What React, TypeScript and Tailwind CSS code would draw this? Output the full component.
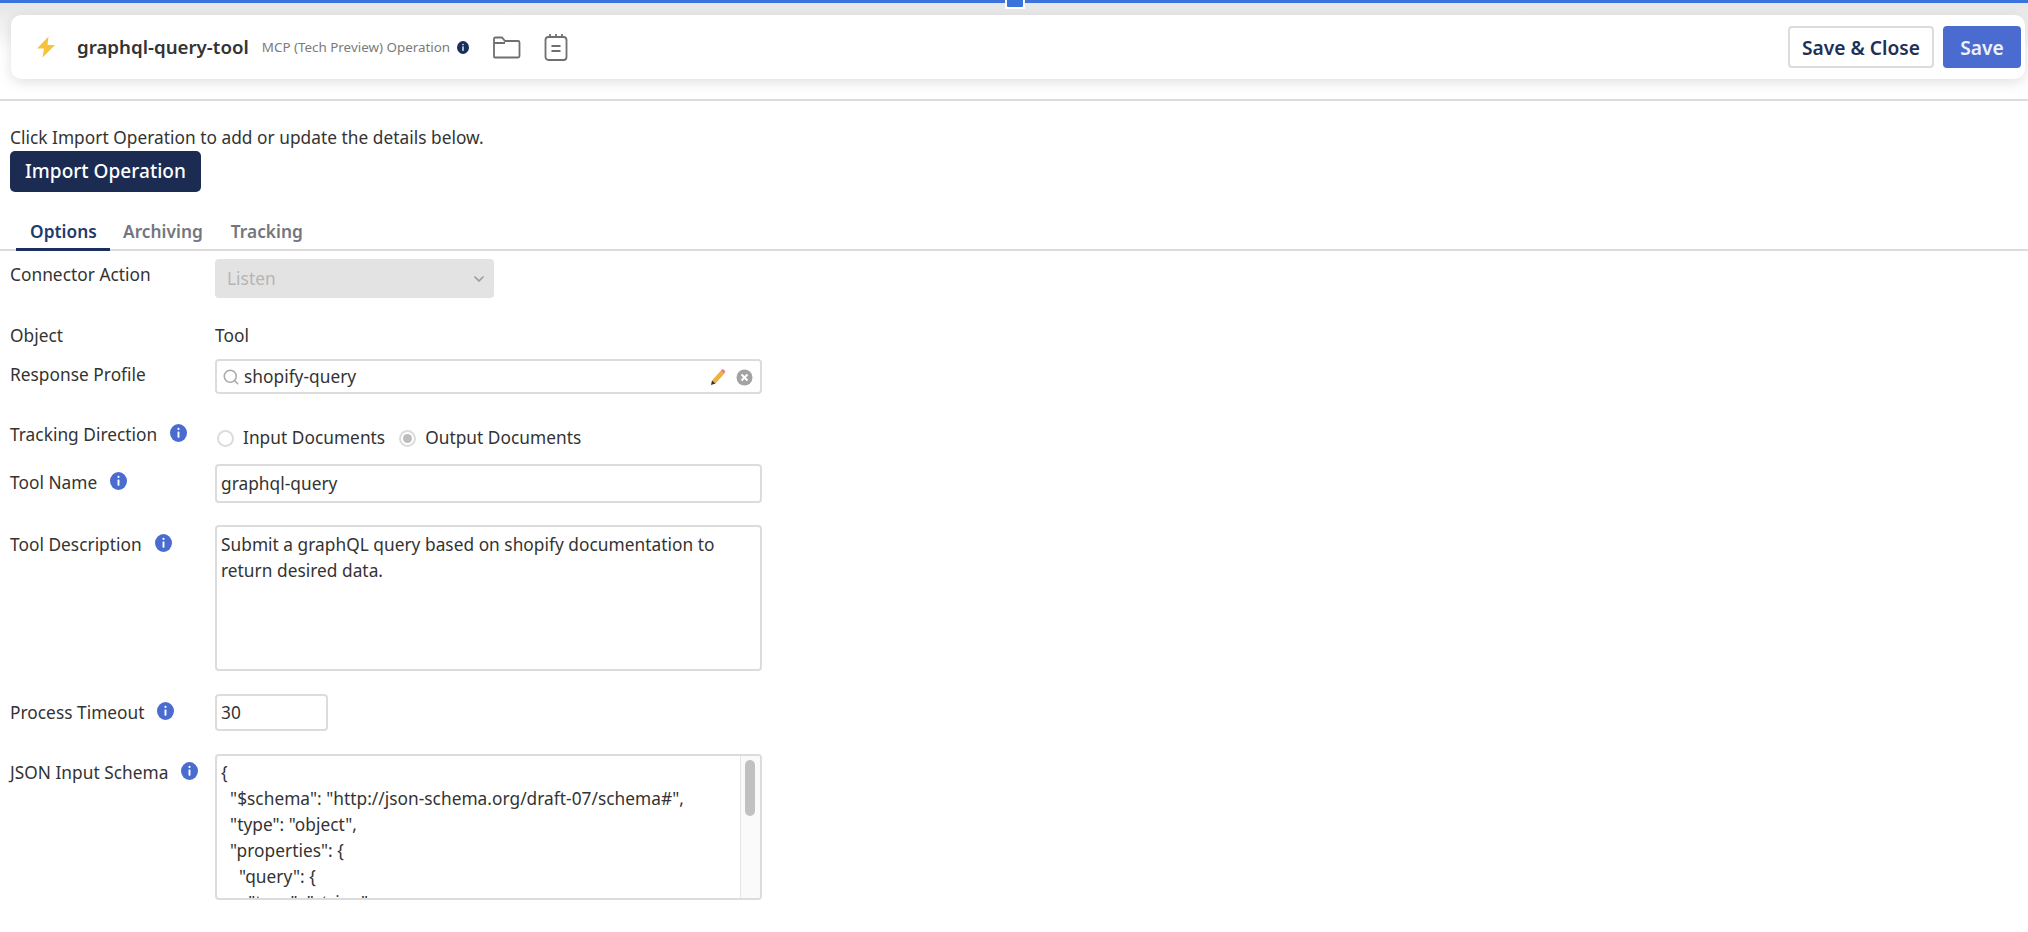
import React from "react";
import { ChevronDown, Search } from "lucide-react";

function Info({ navy = false, small = false }: { navy?: boolean; small?: boolean }) {
  const size = small ? 12 : 17;
  return (
    <svg width={size} height={small ? 13 : 18} viewBox="0 0 16 16" preserveAspectRatio="none" className="shrink-0">
      <circle cx="8" cy="8" r="8" fill={navy ? "#1b2f5e" : "#4a6cd0"} />
      <circle cx="8" cy="4.4" r="1" fill="#fff" />
      <rect x="7.1" y="6.6" width="1.8" height="5.6" rx="0.6" fill="#fff" />
    </svg>
  );
}

function Row({ label, info, top, children, className }: { label: string; info?: number; top: string; children: React.ReactNode; className: string }) {
  return (
    <div className={`flex items-start ${className}`}>
      <div className={`w-[204px] shrink-0 flex items-center ${top}`}>
        <span className="whitespace-nowrap">{label}</span>
        {info !== undefined && (
          <span style={{ marginLeft: info }} className="flex -mt-[4px]">
            <Info />
          </span>
        )}
      </div>
      {children}
    </div>
  );
}

const schema = `{
  "$schema": "http://json-schema.org/draft-07/schema#",
  "type": "object",
  "properties": {
    "query": {
      "type": "string",`;

export default function App() {
  return (
    <div className="h-[932px] overflow-hidden bg-white text-[#333333] text-[17.3px] tracking-[0.03px] leading-[26px] relative" style={{ fontFamily: '"Noto Sans", sans-serif' }}>
      <div className="absolute left-[1005px] top-0 w-[20px] h-[9px] bg-white z-10 flex justify-center">
        <div className="w-[16px] h-[7px] bg-[#3b73dc] rounded-b-[1px]" />
      </div>
      <div className="h-[3px] bg-[#3b73dc]" />
      <div className="h-[98px] border-b-2 border-[#dcdcdc] bg-gradient-to-b from-[#e6e6e6] via-white to-white pt-[12px] pl-[11px] pr-[3px]">
        <div className="h-[64px] bg-white rounded-[10px] shadow-[0_3px_14px_rgba(0,0,0,0.13)] flex items-center pl-[25px] pr-[4px] tracking-normal">
          <svg width="20" height="22" viewBox="0 0 20 22" className="shrink-0">
            <path d="M12.5 0.5 L1 12.5 L8 12.5 L6.5 21.5 L19 9 L11.5 9 Z" fill="#f4c33b" />
          </svg>
          <span className="ml-[21px] text-[18.7px] font-semibold text-[#333333] whitespace-nowrap">graphql-query-tool</span>
          <span className="ml-[13px] text-[13.4px] text-[#7b7b7b] whitespace-nowrap">MCP (Tech Preview) Operation</span>
          <span className="ml-[7px] flex"><Info navy small /></span>
          <svg width="29" height="23" viewBox="0 0 29 23" fill="none" stroke="#6f6f6f" strokeWidth="1.8" className="ml-[23px] shrink-0">
            <path d="M2 20.5 V3 Q2 1.5 3.5 1.5 H10 L13 5 H26 Q27.5 5 27.5 6.5 V20 Q27.5 21.5 26 21.5 H3 Q2 21.5 2 20.5 Z M2 7 H13" />
          </svg>
          <svg width="24" height="28" viewBox="0 0 24 28" fill="none" stroke="#6f6f6f" strokeWidth="1.8" className="ml-[23px] shrink-0">
            <rect x="1.5" y="4" width="21" height="23" rx="3" />
            <path d="M6 1 V5 M12 1 V5 M18 1 V5 M7.5 13 H16.5 M7.5 18 H16.5" />
          </svg>
          <div className="ml-auto flex items-center gap-[9px]">
            <button className="w-[146px] h-[42px] rounded-[4px] border-2 border-[#dcdcdc] bg-white text-[19.2px] font-semibold text-[#1f3057] pt-[1px]">Save &amp; Close</button>
            <button className="w-[78px] h-[42px] rounded-[4px] bg-[#4a6cd0] text-[19.2px] font-semibold text-[#eef1fb] pt-[1px]">Save</button>
          </div>
        </div>
      </div>

      <div className="pl-[10px] pt-[24px] whitespace-nowrap">Click Import Operation to add or update the details below.</div>
      <button className="ml-[10px] block w-[191px] h-[41px] rounded-[5px] bg-[#1b2b52] text-white text-[19px] font-medium pb-[2px]">Import Operation</button>

      <div className="mt-[26px] h-[33px] border-b-2 border-[#dcdcdc] pl-[16px] flex text-[17.3px] font-semibold text-[#73767c]">
        <div className="w-[94px] h-[33px] border-b-[3px] border-[#1b2f5e] text-[#1f3a6e] pl-[14px] leading-[27px]">Options</div>
        <div className="ml-[13px] leading-[27px]">Archiving</div>
        <div className="ml-[28px] leading-[27px]">Tracking</div>
      </div>

      <div className="pl-[10px]">
        <Row label="Connector Action" top="pt-[3px]" className="mt-[8px] h-[39px]">
          <div className="ml-[1px] w-[279px] h-[39px] rounded-[4px] bg-[#e3e3e3] flex items-center justify-between pl-[12px] pr-[7px] text-[#b5b5b5]">
            <span>Listen</span>
            <ChevronDown size={16} color="#9a9a9a" strokeWidth={2.5} />
          </div>
        </Row>

        <Row label="Object" top="" className="mt-[25px] h-[26px]">
          <span className="ml-[1px]">Tool</span>
        </Row>

        <Row label="Response Profile" top="pt-[3px]" className="mt-[10px] h-[35px]">
          <div className="ml-[1px] w-[547px] h-[35px] rounded-[4px] border-2 border-[#dcdcdc] flex items-center pl-[5px] pr-[7px]">
            <Search size={18} color="#a8a8a8" strokeWidth={2} className="shrink-0" />
            <span className="ml-[4px]">shopify-query</span>
            <svg width="16" height="18" viewBox="0 0 16 18" className="ml-auto shrink-0">
              <path d="M2 12.5 L10.5 3 L14 6 L5.5 15.5 Z" fill="#eeb13e" />
              <path d="M10.5 3 L12 1.4 Q12.6 0.8 13.5 1.5 L15 2.8 Q15.6 3.6 15 4.3 L14 6 Z" fill="#ef7f7f" />
              <path d="M2 12.5 L5.5 15.5 L1 17 Z" fill="#333" />
            </svg>
            <svg width="17" height="17" viewBox="0 0 17 17" className="ml-[10px] mt-[2px] shrink-0">
              <circle cx="8.5" cy="8.5" r="8" fill="#a3a3a3" />
              <path d="M5.5 5.5 L11.5 11.5 M11.5 5.5 L5.5 11.5" stroke="#fff" strokeWidth="2" />
            </svg>
          </div>
        </Row>

        <Row label="Tracking Direction" info={13} top="" className="mt-[28px] h-[26px]">
          <div className="flex items-center pt-[3px] pl-[3px]">
            <span className="w-[17px] h-[17px] rounded-full border-2 border-[#dcdcdc] bg-white" />
            <span className="ml-[9px]">Input Documents</span>
            <span className="ml-[14px] w-[17px] h-[17px] rounded-full border-2 border-[#dcdcdc] bg-white flex items-center justify-center">
              <span className="w-[9px] h-[9px] rounded-full bg-[#bdbdbd]" />
            </span>
            <span className="ml-[9px]">Output Documents</span>
          </div>
        </Row>

        <Row label="Tool Name" info={13} top="pt-[6px]" className="mt-[16px] h-[39px]">
          <div className="ml-[1px] w-[547px] h-[39px] rounded-[4px] border-2 border-[#dcdcdc] flex items-center pl-[4px]">graphql-query</div>
        </Row>

        <Row label="Tool Description" info={13} top="pt-[7px]" className="mt-[22px] h-[146px]">
          <div className="ml-[1px] w-[547px] h-[146px] rounded-[4px] border-2 border-[#dcdcdc] pl-[4px] pr-[5px] pt-[5px]">
            Submit a graphQL query based on shopify documentation to return desired data.
          </div>
        </Row>

        <Row label="Process Timeout" info={12} top="pt-[6px]" className="mt-[23px] h-[37px]">
          <div className="ml-[1px] w-[113px] h-[37px] rounded-[4px] border-2 border-[#dcdcdc] flex items-center pl-[4px]">30</div>
        </Row>

        <Row label="JSON Input Schema" info={13} top="pt-[6px]" className="mt-[23px] h-[146px]">
          <div className="ml-[1px] w-[547px] h-[146px] rounded-[4px] border-2 border-[#dcdcdc] flex overflow-hidden">
            <pre className="flex-1 overflow-hidden pl-[4px] pt-[4px] whitespace-pre" style={{ fontFamily: '"Noto Sans", sans-serif' }}>{schema}</pre>
            <div className="w-[20px] h-full border-l border-[#e6e6e6] bg-[#fafafa] px-[4px] pt-[4px]">
              <div className="w-[10px] h-[56px] rounded-[5px] bg-[#c1c1c1]" />
            </div>
          </div>
        </Row>
      </div>
    </div>
  );
}
